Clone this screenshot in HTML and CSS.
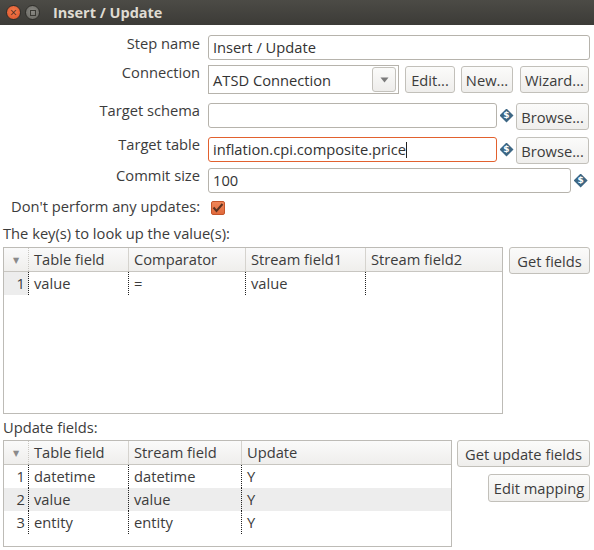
FILE: index.html
```html
<!DOCTYPE html>
<html>
<head>
<meta charset="utf-8">
<link rel="stylesheet" href="styles.css">
</head>
<body>
<div class="window">
  <div class="titlebar">
    <span class="wbtn close">×</span>
    <span class="wbtn max"><span class="sq"></span></span>
    <span class="title">Insert / Update</span>
  </div>
  <div class="content">
    <div class="row r-step">
      <label class="lbl">Step name</label>
      <div class="input full">Insert / Update</div>
    </div>
    <div class="row r-conn">
      <label class="lbl">Connection</label>
      <div class="combo">
        <span class="combo-text">ATSD Connection</span>
        <span class="combo-btn"><svg width="9" height="6" viewBox="0 0 9 6"><path d="M0.5 0.5 L8.5 0.5 L4.5 5.5 Z" fill="#7b7b7b"/></svg></span>
      </div>
      <button class="btn b-edit">Edit...</button>
      <button class="btn b-new">New...</button>
      <button class="btn b-wiz">Wizard...</button>
    </div>
    <div class="row r-schema">
      <label class="lbl">Target schema</label>
      <div class="input w-mid"></div>
      <span class="var"><span class="dol">$</span></span>
      <button class="btn b-browse">Browse...</button>
    </div>
    <div class="row r-table">
      <label class="lbl">Target table</label>
      <div class="input w-mid focus">inflation.cpi.composite.price<span class="caret"></span></div>
      <span class="var"><span class="dol">$</span></span>
      <button class="btn b-browse">Browse...</button>
    </div>
    <div class="row r-commit">
      <label class="lbl">Commit size</label>
      <div class="input w-long">100</div>
      <span class="var"><span class="dol">$</span></span>
    </div>
    <div class="row r-check">
      <label class="lbl">Don't perform any updates:</label>
      <span class="check"><svg width="12" height="10" viewBox="0 0 12 10"><path d="M1.5 4.5 L4.5 8 L10.5 1" fill="none" stroke="#5b3322" stroke-width="2"/></svg></span>
    </div>

    <div class="section-title s-keys">The key(s) to look up the value(s):</div>
    <div class="grid-row g-keys">
      <div class="table t-keys">
        <div class="thead">
          <div class="th idx"><span class="sort">▼</span></div>
          <div class="th c1">Table field</div>
          <div class="th c2">Comparator</div>
          <div class="th c3">Stream field1</div>
          <div class="th c4 last">Stream field2</div>
        </div>
        <div class="tr sel">
          <div class="td idx">1</div>
          <div class="td c1">value</div>
          <div class="td c2">=</div>
          <div class="td c3">value</div>
          <div class="td c4 last"></div>
        </div>
      </div>
      <div class="side">
        <button class="btn b-getf">Get fields</button>
      </div>
    </div>

    <div class="section-title s-upd">Update fields:</div>
    <div class="grid-row g-upd">
      <div class="table t-upd">
        <div class="thead">
          <div class="th idx"><span class="sort">▼</span></div>
          <div class="th d1">Table field</div>
          <div class="th d2">Stream field</div>
          <div class="th d3 last">Update</div>
        </div>
        <div class="tr">
          <div class="td idx">1</div>
          <div class="td d1">datetime</div>
          <div class="td d2">datetime</div>
          <div class="td d3 last">Y</div>
        </div>
        <div class="tr alt">
          <div class="td idx">2</div>
          <div class="td d1">value</div>
          <div class="td d2">value</div>
          <div class="td d3 last">Y</div>
        </div>
        <div class="tr">
          <div class="td idx">3</div>
          <div class="td d1">entity</div>
          <div class="td d2">entity</div>
          <div class="td d3 last">Y</div>
        </div>
      </div>
      <div class="side right">
        <button class="btn b-getu">Get update fields</button>
        <button class="btn b-map">Edit mapping</button>
      </div>
    </div>
  </div>
</div>
</body>
</html>
```
FILE: styles.css
```css
* { box-sizing: border-box; }
html, body { margin: 0; padding: 0; background: #ffffff; }
body {
  font-family: "Open Sans", "DejaVu Sans", sans-serif;
  font-size: 14.7px;
  color: #3c3c3c;
  width: 594px;
  height: 550px;
  overflow: hidden;
}
.titlebar {
  height: 25px;
  background: linear-gradient(#4c4b46, #3c3b37);
  display: flex;
  align-items: center;
  padding-left: 6px;
}
.wbtn {
  width: 15px; height: 15px;
  border-radius: 50%;
  display: flex; align-items: center; justify-content: center;
  margin-right: 4px;
  font-size: 12px;
  line-height: 1;
  color: #4a2a1e;
}
.wbtn.close {
  background: radial-gradient(circle at 50% 40%, #f47c4d, #d9522a);
  border: 1px solid #2f2e2a;
}
.wbtn.max {
  background: radial-gradient(circle at 50% 40%, #8a8984, #66655f);
  border: 1px solid #2f2e2a;
}
.wbtn .sq { width: 6px; height: 6px; border: 1px solid #3a3934; }
.title {
  margin-left: 9px;
  font-weight: bold;
  font-size: 14.5px;
  color: #dfdbd2;
}
.content { padding: 0 4px 0 0; }
.row { display: flex; align-items: flex-start; }
.lbl {
  width: 200px;
  flex: none;
  text-align: right;
  margin-right: 8px;
  margin-top: -2px;
  line-height: 18px;
  color: #3c3c3c;
}
.input {
  height: 25px;
  border: 1px solid #b6b3ac;
  border-radius: 3px;
  background: #fff;
  padding: 0 4px;
  line-height: 23px;
  color: #333;
  white-space: nowrap;
  overflow: hidden;
}
.input.full { width: 382px; }
.input.w-mid { width: 289px; }
.input.w-long { width: 369px; }
.input.focus { border-color: #e2612e; }
.caret { display: inline-block; width: 1px; height: 16px; background: #222; vertical-align: -3px; }
.r-step { margin-top: 10px; }
.r-step .lbl { margin-top: -1px; }
.r-conn { margin-top: 5px; }
.combo {
  width: 191px; height: 29px;
  border: 1px solid #b6b3ac;
  background: #fff;
  display: flex; align-items: center;
  padding: 0 2px 0 4px;
}
.combo-text { flex: 1; color: #333; }
.combo-btn {
  width: 24px; height: 25px;
  border: 1px solid #c3c1bb;
  border-radius: 3px;
  background: linear-gradient(#fbfbfa, #eeedeb);
  display: flex; align-items: center; justify-content: center;
}
.btn {
  font-family: inherit;
  font-size: 14.7px;
  color: #3c3c3c;
  border: 1px solid #c2c0ba;
  border-radius: 3px;
  background: linear-gradient(#fbfbfa, #efeeec);
  padding: 0;
  height: 27px;
  margin: 0;
  white-space: nowrap;
}
.b-edit { width: 50px; margin-left: 6px; margin-top: 1px; }
.b-new { width: 52px; margin-left: 6px; margin-top: 1px; }
.b-wiz { width: 69px; margin-left: 7px; margin-top: 1px; }
.r-schema { margin-top: 9px; }
.r-table { margin-top: 7px; }
.r-commit { margin-top: 4px; }
.var {
  width: 19px; height: 25px;
  display: flex; align-items: center; justify-content: center;
}
.dol {
  width: 14px; height: 14px;
  background: #3d6784;
  clip-path: polygon(50% 0, 100% 50%, 50% 100%, 0 50%);
  display: flex; align-items: center; justify-content: center;
  font-size: 9px;
  font-weight: bold;
  color: #fff;
  font-family: "DejaVu Sans", sans-serif;
  line-height: 1;
}
.b-browse { width: 73px; }
.r-check { margin-top: 6px; }
.check {
  width: 14px; height: 14px;
  margin-left: 3px; margin-top: 2px;
  border-radius: 2px;
  background: linear-gradient(#ef8558, #e06a3c);
  border: 1px solid #c4542a;
  display: flex; align-items: center; justify-content: center;
}
.section-title { margin-left: 3px; line-height: 18px; }
.s-keys { margin-top: 9px; }
.s-upd { margin-top: 4px; }
.grid-row { display: flex; align-items: flex-start; margin-top: 4px; padding-left: 3px; }
.g-keys { margin-top: 5px; }
.table {
  border: 1px solid #bdbbb6;
  background: #fff;
  flex: none;
}
.t-keys { width: 500px; height: 167px; }
.t-upd { width: 449px; height: 107px; }
.thead {
  display: flex;
  height: 24px;
  background: linear-gradient(#fafafa, #efeeec);
  border-bottom: 1px solid #c8c6c1;
}
.th {
  line-height: 23px;
  padding-left: 5px;
  border-right: 1px solid #d5d3ce;
  white-space: nowrap;
}
.th.last { border-right: none; }
.th.idx { padding-left: 0; text-align: center; border-right: 1px dotted #c8c6c1; }
.sort { font-size: 8px; color: #8a8a8a; vertical-align: 2px; }
.tr { display: flex; height: 23px; }
.td {
  line-height: 22px;
  padding-left: 5px;
  white-space: nowrap;
  border-right: 1px dotted #222;
}
.td.last { border-right: none; }
.td.idx { text-align: right; padding-left: 0; padding-right: 3px; }
.tr.sel .td.idx { background: #ededed; }
.tr.alt { background: #ededed; }
.idx { width: 25px; flex: none; }
.c1 { width: 100px; }
.c2 { width: 117px; }
.c3 { width: 120px; }
.c4 { flex: 1; }
.d1 { width: 100px; }
.d2 { width: 113px; }
.d3 { flex: 1; }
.side { display: flex; flex-direction: column; align-items: flex-end; flex: 1; gap: 7px; }
.b-getf { width: 81px; }
.b-getu { width: 133px; height: 27px; }
.b-map { width: 102px; height: 28px; }
```
